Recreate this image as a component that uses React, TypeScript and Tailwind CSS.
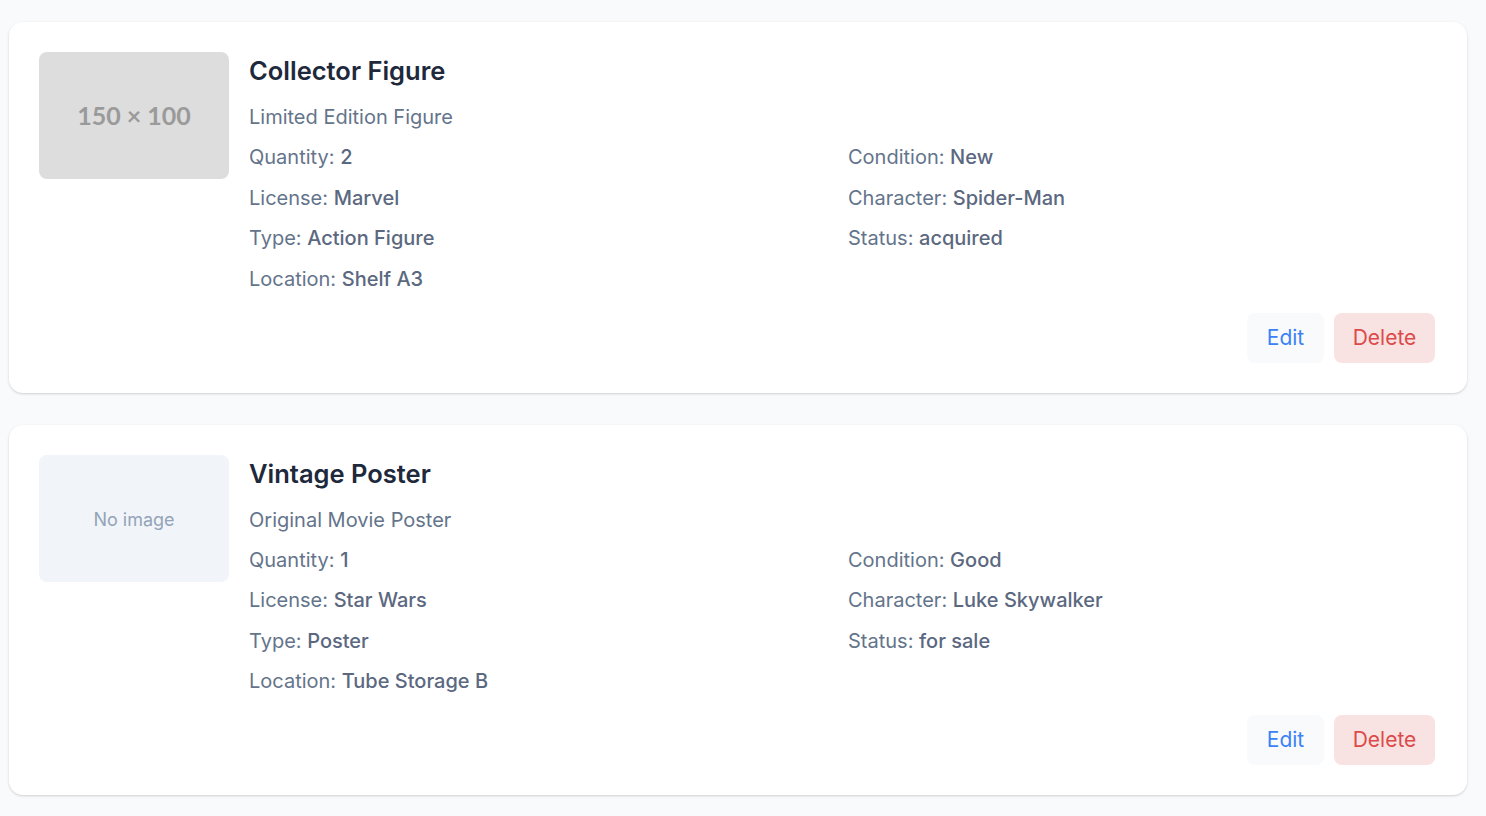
import React from "react";

type Item = {
  title: string;
  desc: string;
  image: boolean;
  left: [string, string][];
  right: [string, string][];
};

const items: Item[] = [
  {
    title: "Collector Figure",
    desc: "Limited Edition Figure",
    image: true,
    left: [
      ["Quantity", "2"],
      ["License", "Marvel"],
      ["Type", "Action Figure"],
      ["Location", "Shelf A3"],
    ],
    right: [
      ["Condition", "New"],
      ["Character", "Spider-Man"],
      ["Status", "acquired"],
    ],
  },
  {
    title: "Vintage Poster",
    desc: "Original Movie Poster",
    image: false,
    left: [
      ["Quantity", "1"],
      ["License", "Star Wars"],
      ["Type", "Poster"],
      ["Location", "Tube Storage B"],
    ],
    right: [
      ["Condition", "Good"],
      ["Character", "Luke Skywalker"],
      ["Status", "for sale"],
    ],
  },
];

function Field({ label, value }: { label: string; value: string }) {
  return (
    <div className="text-[20px] leading-[28px] text-[#64748b] whitespace-nowrap">
      {label}: <span className="font-medium text-[#5b6880]">{value}</span>
    </div>
  );
}

function Card({ item }: { item: Item }) {
  return (
    <div className="bg-white rounded-[14px] shadow-[0_1px_3px_rgba(0,0,0,0.12),0_1px_2px_rgba(0,0,0,0.06)] p-[30px]">
      <div className="flex gap-[20px]">
        {item.image ? (
          <div className="w-[190px] h-[127px] shrink-0 rounded-[8px] bg-[#dddddd] flex items-center justify-center">
            <span
              className="text-[25px] font-bold text-[#9a9a9a]"
              style={{ fontFamily: "Lato, 'Open Sans', sans-serif" }}
            >
              150 × 100
            </span>
          </div>
        ) : (
          <div className="w-[190px] h-[127px] shrink-0 rounded-[8px] bg-[#f1f5f9] flex items-center justify-center pt-[2px]">
            <span className="text-[18px] text-[#94a3b8]">No image</span>
          </div>
        )}
        <div className="flex-1 min-w-0 pt-[1px]">
          <h2 className="text-[25.5px] leading-[36px] font-semibold text-[#1e293b]">{item.title}</h2>
          <p className="text-[20px] leading-[28px] text-[#64748b] mt-[14px]">{item.desc}</p>
          <div className="grid grid-cols-2 gap-x-[10px] mt-[12px]">
            <div className="flex flex-col gap-[12.5px]">
              {item.left.map(([l, v]) => (
                <Field key={l} label={l} value={v} />
              ))}
            </div>
            <div className="flex flex-col gap-[12.5px]">
              {item.right.map(([l, v]) => (
                <Field key={l} label={l} value={v} />
              ))}
            </div>
          </div>
        </div>
      </div>
      <div className="flex justify-end gap-[10px] mt-[20px] pr-[2px]">
        <button className="h-[50px] w-[77px] rounded-[8px] bg-[#f8fafc] text-[#3b82f6] text-[21px]">Edit</button>
        <button className="h-[50px] w-[101px] rounded-[8px] bg-[#f9e2e2] text-[#dc4a4a] text-[21px]">Delete</button>
      </div>
    </div>
  );
}

export default function App() {
  return (
    <div
      className="min-h-[816px] bg-[#f8fafc] pl-[9px] pr-[19px] pt-[22px] pb-[20px] flex flex-col gap-[32px]"
      style={{ fontFamily: "Inter, 'Noto Sans', sans-serif" }}
    >
      {items.map((it) => (
        <Card key={it.title} item={it} />
      ))}
    </div>
  );
}
